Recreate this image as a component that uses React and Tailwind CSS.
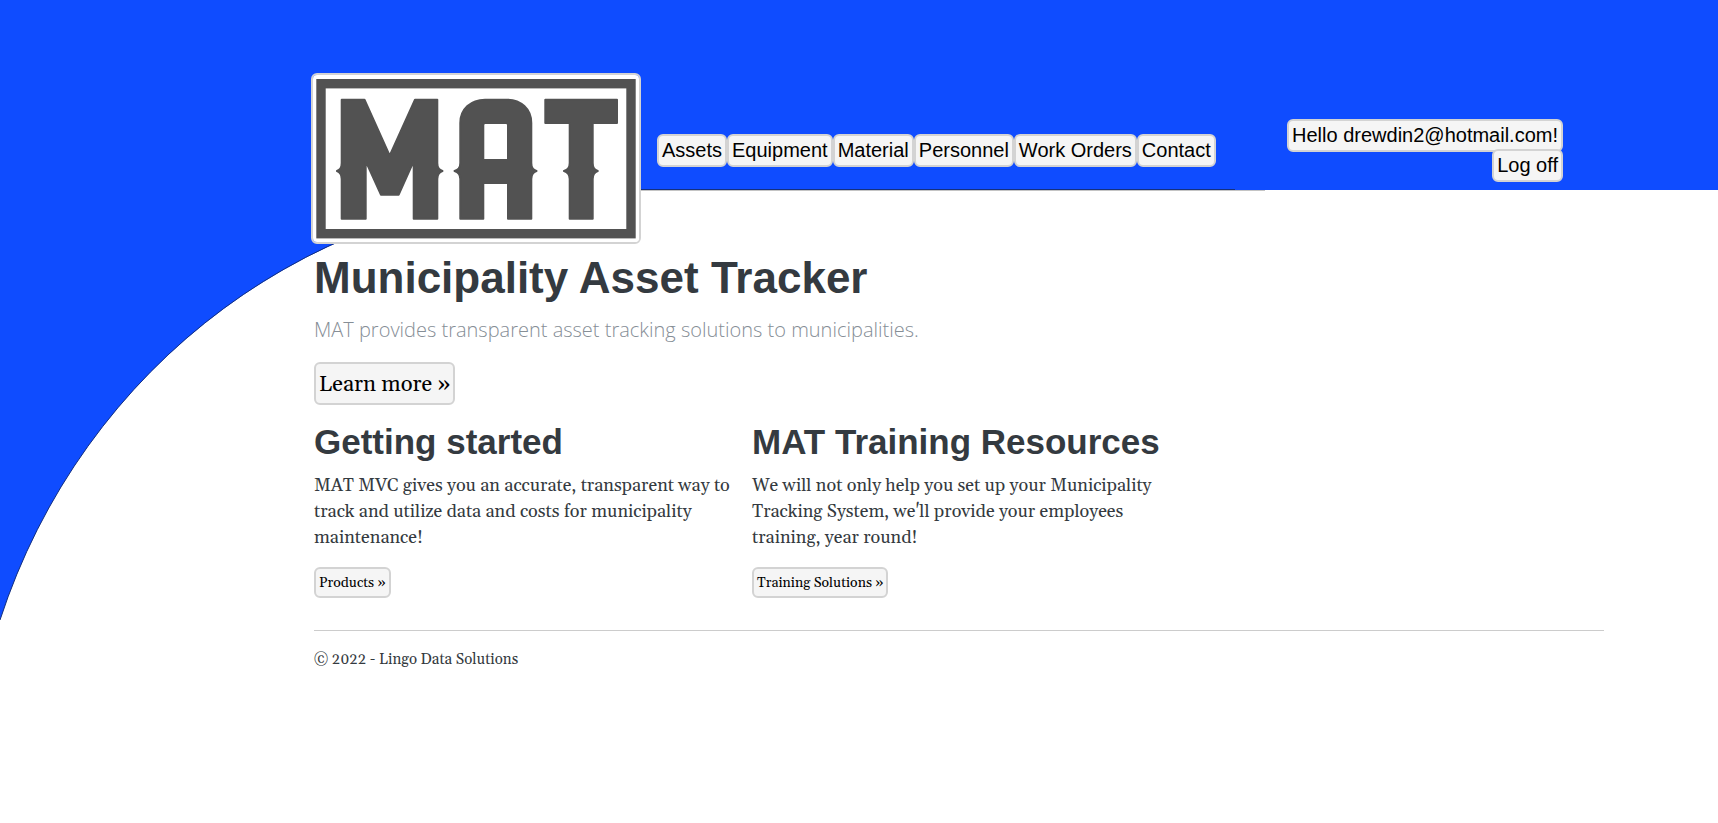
const navItems = ["Assets", "Equipment", "Material", "Personnel", "Work Orders", "Contact"];

const features = [
  {
    title: "Getting started",
    text: "MAT MVC gives you an accurate, transparent way to track and utilize data and costs for municipality maintenance!",
    action: "Products »",
  },
  {
    title: "MAT Training Resources",
    text: "We will not only help you set up your Municipality Tracking System, we'll provide your employees training, year round!",
    action: "Training Solutions »",
  },
];

const sans = "font-['Liberation_Sans',Arial,sans-serif]";
const serif = "font-['Gelasio','Georgia','Liberation_Serif',serif]";
const chip = "rounded-md border-2 border-[#d3d3d3] bg-[#f5f5f5] px-[3px] text-black";
const headerChip = `block leading-[29px] whitespace-nowrap ${chip}`;

function Backdrop() {
  return (
    <div aria-hidden="true" className="absolute inset-x-0 top-0 -z-10 overflow-hidden">
      <svg width="4000" height="640" viewBox="0 0 4000 640" className="block max-w-none">
        <path d="M0 0H4000V190H583A615 630 0 0 0 0 620Z" fill="#0f4cff" />
        <path d="M583 190.500H1265" stroke="#c4c4c4" strokeWidth="1" />
        <path d="M1235 189.500H583A615 630 0 0 0 0 620" fill="none" stroke="#14307f" strokeWidth="1" />
      </svg>
    </div>
  );
}

function Logo() {
  return (
    <svg role="img" aria-label="MAT" viewBox="0 0 326 167" className="block h-[167px] w-[326px]">
      <rect width="326" height="167" fill="#fff" />
      <rect x="8" y="8.7" width="310" height="150" fill="none" stroke="#525252" strokeWidth="9.400" />
      <g fill="#525252" stroke="#525252" strokeWidth="2" strokeLinejoin="round">
        <path d="M28.700 24.700H51.500L76.700 80.700L102 24.700H124.300V88Q124.300 94.500 129.500 96Q124.300 97.500 124.300 104V143.700H100.700V86L85.700 119.700H67.900L52.700 86V143.700H28.700V104Q28.700 97.500 23.900 96Q28.700 94.500 28.700 88Z" />
        <path
          fillRule="evenodd"
          d="M147.300 48C147.300 34 158 24.700 172 24.700H193.500C208 24.700 218.300 34 218.300 48V88Q218.300 94.500 223.500 96Q218.300 97.500 218.300 104V143.700H195V108H170.300V143.700H147.300V104Q147.300 97.500 141.500 96Q147.300 94.500 147.300 88ZM170.300 50V85H195V50Q195 48 193 48H172.300Q170.300 48 170.300 50Z"
        />
        <path d="M232.300 24.700H304V48H279.700V88Q279.700 94.500 284.800 96Q279.700 97.500 279.700 104V143.700H256.700V104Q256.700 97.500 250.900 96Q256.700 94.500 256.700 88V48H232.300Z" />
      </g>
    </svg>
  );
}

function Feature({ title, text, action }) {
  return (
    <section className="w-[420px]">
      <h2 className={`text-[35px] leading-[42px] font-bold ${sans}`}>{title}</h2>
      <p className={`mt-2.5 text-[18px] leading-[26px] ${serif}`}>{text}</p>
      <a href="#" className={`mt-4 inline-block pt-[5px] pb-[3px] text-[14px] leading-[19px] ${chip} ${serif}`}>
        {action}
      </a>
    </section>
  );
}

export default function App() {
  return (
    <div className="relative isolate min-h-screen bg-white pt-[73px] text-[#343a40]">
      <Backdrop />
      <header className={`mr-[155px] ml-[311px] flex text-[20px] ${sans}`}>
        <a href="#" className="block shrink-0 overflow-hidden rounded-md border-2 border-[#d3d3d3]">
          <Logo />
        </a>
        <nav className="mt-[61px] ml-4">
          <ul className="flex">
            {navItems.map((item) => (
              <li key={item}>
                <a href="#" className={headerChip}>{item}</a>
              </li>
            ))}
          </ul>
        </nav>
        <div className="mt-[46px] ml-auto flex flex-col items-end">
          <a href="#" className={headerChip}>Hello drewdin2@hotmail.com!</a>
          <button type="button" className={`-mt-[3px] ${headerChip}`}>Log off</button>
        </div>
      </header>

      <div className="mr-[114px] ml-[314px]">
        <main>
          <h1 className={`mt-2 text-[44px] leading-[52px] font-bold ${sans}`}>Municipality Asset Tracker</h1>
          <p className="mt-2 font-['Open_Sans','Noto_Sans',sans-serif] text-[20px] leading-9 font-light text-[#868e96]">
            MAT provides transparent asset tracking solutions to municipalities.
          </p>
          <a href="#" className={`mt-3.5 inline-block pt-1.5 pb-0.5 text-[22px] leading-[31px] ${chip} ${serif}`}>
            Learn more »
          </a>
          <div className="mt-4 flex gap-[18px]">
            {features.map((feature) => (
              <Feature key={feature.title} {...feature} />
            ))}
          </div>
        </main>
        <footer className={`mt-8 border-t border-[#cccccc] pt-4 text-[15px] leading-[26px] ${serif}`}>
          © 2022 - Lingo Data Solutions
        </footer>
      </div>
    </div>
  );
}
